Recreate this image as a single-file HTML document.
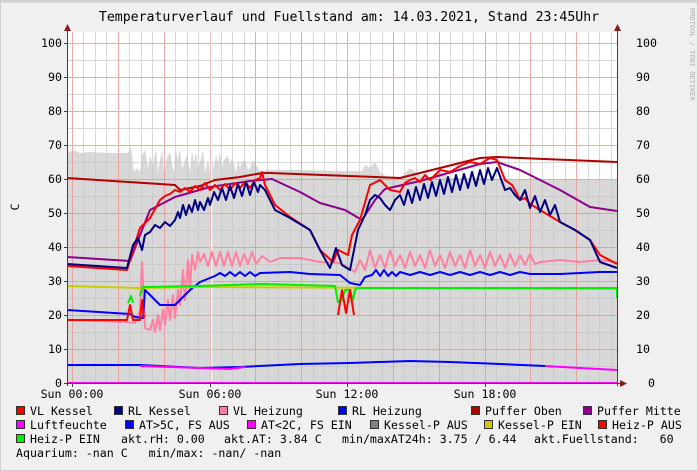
<!DOCTYPE html>
<html><head><meta charset="utf-8"><style>
html,body{margin:0;padding:0;background:#f0f0f0;}
svg{display:block}
text{font-family:"DejaVu Sans Mono","Liberation Mono",monospace;font-size:11.6px;fill:#000}
</style></head><body>
<svg width="698" height="471" viewBox="0 0 698 471" xmlns="http://www.w3.org/2000/svg">
<rect x="0" y="0" width="698" height="471" fill="#f0f0f0"/>
<rect x="0.5" y="0.5" width="697" height="470" fill="none" stroke="#cfcfcf"/>
<rect x="1" y="1" width="696" height="2" fill="#d8d8d8"/>
<text x="349" y="21" text-anchor="middle" style="font-size:13.2px">Temperaturverlauf und Fuellstand am: 14.03.2021, Stand 23:45Uhr</text>
<text transform="translate(690,8) rotate(90)" style="font-size:7px;fill:#b0b0b0">RRDTOOL / TOBI OETIKER</text>
<rect x="67" y="32" width="550" height="351" fill="#ffffff"/>
<polygon fill="#d8d8d8" points="67,383 67,152 75,151 80,153 90,152 110,153 128,153 131,147 134,172 137,168 140,172 142,155 145,150 148,168 150,155 153,165 156,148 158,172 160,160 162,150 164,172 167,158 170,152 172,165 174,172 176,150 178,160 180,148 182,170 185,160 187,155 190,172 192,150 194,163 196,152 198,168 201,158 203,150 205,172 208,160 210,172 212,158 214,168 216,155 218,163 220,152 222,168 224,160 226,158 228,155 230,165 232,158 234,164 236,172 238,160 240,168 242,162 245,160 248,170 250,168 253,160 255,163 258,168 260,172 264,172 265,170 300,170 340,171 362,171 365,165 370,168 375,162 380,172 385,176 400,178 410,168 420,175 430,180 440,172 450,178 480,178 497,179 617,180 617,383"/>
<g stroke="#c8c8c8" stroke-width="1" opacity="0.7">
<path d="M83.5,32V383M95.5,32V383M106.5,32V383M129.5,32V383M141.5,32V383M152.5,32V383M175.5,32V383M187.5,32V383M198.5,32V383M221.5,32V383M232.5,32V383M244.5,32V383M267.5,32V383M278.5,32V383M290.5,32V383M313.5,32V383M324.5,32V383M336.5,32V383M359.5,32V383M370.5,32V383M382.5,32V383M404.5,32V383M416.5,32V383M427.5,32V383M450.5,32V383M462.5,32V383M473.5,32V383M496.5,32V383M508.5,32V383M519.5,32V383M542.5,32V383M553.5,32V383M565.5,32V383M588.5,32V383M599.5,32V383M611.5,32V383"/>
<path d="M67,366.5H617M67,332.5H617M67,298.5H617M67,264.5H617M67,230.5H617M67,196.5H617M67,162.5H617M67,128.5H617M67,94.5H617M67,60.5H617"/>
</g>
<g stroke="#e89090" stroke-width="1" opacity="0.75">
<path d="M72.5,32V383M118.5,32V383M164.5,32V383M210.5,32V383M255.5,32V383M301.5,32V383M347.5,32V383M393.5,32V383M439.5,32V383M485.5,32V383M530.5,32V383M576.5,32V383"/>
<path d="M67,349.5H617M67,315.5H617M67,281.5H617M67,247.5H617M67,213.5H617M67,179.5H617M67,145.5H617M67,111.5H617M67,77.5H617M67,43.5H617"/>
</g>
<path d="M211.5,32V383" stroke="#fff" stroke-width="1.5"/>
<g fill="none" stroke-width="2" stroke-linejoin="round">
<polyline stroke="#ff80a0" points="67,320 127,322 135,323 140,310 142,262 145,328 150,330 153,320 155,332 158,315 160,330 163,310 165,325 168,300 170,320 173,295 175,318 178,290 180,305 183,270 185,300 188,260 190,290 192,255 195,270 198,252 200,262 204,254 208,266 212,252 216,266 220,252 224,266 228,252 232,266 236,252 240,266 244,254 248,264 252,252 256,264 262,256 270,262 280,258 300,258 320,262 340,263 355,272 360,260 365,270 370,250 375,268 380,255 385,268 390,250 395,266 400,255 405,268 410,252 415,266 420,255 425,268 430,250 435,266 440,255 445,268 450,252 455,266 460,255 465,268 470,250 475,266 480,255 485,268 490,252 495,266 500,255 505,268 510,254 515,266 520,255 525,265 530,254 535,264 540,262 560,260 580,262 600,260 617,262"/>
<polyline stroke="#0000ff" points="67,310 130,314 135,317 143,318 145,290 150,295 160,305 175,305 185,295 190,290 200,282 215,276 220,273 225,276 230,272 235,276 240,272 245,276 250,272 255,276 260,273 290,272 310,274 340,275 350,283 360,285 365,277 372,275 376,270 380,276 384,270 388,276 392,272 396,276 400,272 410,275 420,272 430,275 440,272 450,275 460,272 470,275 480,272 490,275 500,272 510,275 520,272 530,274 560,274 600,272 617,272"/>
<polyline stroke="#cccc00" points="67,286 140,288 200,287 617,289"/>
<polyline stroke="#00ee00" points="140,296 143,287 200,286 230,285 260,284 300,285 335,286 338,302 342,300 345,290 350,290 353,300 355,290 357,288 617,288 617,298"/>
<polyline stroke="#00ee00" points="128,303 131,296 133,303"/>
<polyline stroke="#8c008c" points="67,257 130,261 140,235 150,210 175,197 210,187 250,181 272,179 300,192 320,203 345,210 362,220 375,200 385,189 420,181 480,164 497,162 520,170 560,190 590,207 617,211"/>
<polyline stroke="#b00000" points="67,178 175,185 180,190 200,186 215,180 240,177 262,173 270,173 400,178 480,158 497,157 617,162"/>
<polyline stroke="#ff0000" points="67,266 127,270 133,250 140,228 150,218 160,200 165,196 170,194 175,190 180,192 185,188 190,192 195,186 200,190 205,183 210,190 215,185 220,190 225,184 230,190 235,183 240,188 245,182 250,188 255,180 260,178 262,172 265,185 275,205 290,217 310,230 320,250 333,262 338,250 348,255 352,235 360,220 370,185 380,180 390,190 400,192 405,183 410,180 415,178 420,182 425,175 430,180 440,170 450,172 460,166 470,162 480,164 490,158 497,160 505,180 512,185 516,192 520,200 525,198 530,204 540,210 560,222 575,230 590,240 600,255 617,264"/>
<polyline stroke="#ff0000" points="67,320 127,320 130,305 133,320 140,320 142,300 144,318"/>
<polyline stroke="#ff0000" points="338,315 342,290 346,313 350,290 354,315"/>
<polyline stroke="#000080" points="67,264 127,268 133,245 138,238 142,250 145,235 150,232 155,225 160,228 165,222 170,226 175,220 178,212 180,218 183,205 186,215 189,205 192,212 195,200 198,210 200,202 204,210 208,198 210,205 214,192 218,200 222,188 226,200 230,186 234,198 238,184 242,196 246,182 250,195 254,182 258,192 260,185 265,190 275,210 290,218 310,230 320,250 330,268 336,248 342,265 350,270 358,230 365,215 370,200 375,195 380,198 385,205 390,210 395,200 400,195 404,205 408,190 412,203 416,187 420,200 424,184 428,198 432,182 436,196 440,180 444,194 448,177 452,192 456,175 460,190 464,174 468,188 472,172 476,186 480,170 484,184 488,168 492,180 497,168 505,190 510,188 515,195 520,200 525,190 530,208 535,196 540,212 545,200 550,215 555,205 560,222 575,230 590,240 600,262 617,268"/>
<polyline stroke="#0000ff" points="67,365 140,365 200,368 240,367 300,364 350,363 410,361 450,362 500,364 545,366"/>
<polyline stroke="#ff00ff" points="140,366 200,368 230,369 245,367"/>
<polyline stroke="#ff00ff" points="545,366 580,368 617,370"/>
<line x1="67" y1="383" x2="617" y2="383" stroke="#ff00ff"/>
</g>
<g stroke="#404040" stroke-width="1">
<path d="M67.5,30V386M617.5,30V386M64,383.5H622"/>
<path d="M64,43.5H67M64,77.5H67M64,111.5H67M64,145.5H67M64,179.5H67M64,213.5H67M64,247.5H67M64,281.5H67M64,315.5H67M64,349.5H67M64,383.5H67"/>
<path d="M72.5,383V387M210.5,383V387M347.5,383V387M485.5,383V387"/>
</g>
<polygon points="64,31 67.5,24 71,31" fill="#8b1a1a"/>
<polygon points="614,31 617.5,24 621,31" fill="#8b1a1a"/>
<polygon points="620,380 627,383.5 620,387" fill="#8b1a1a"/>
<g text-anchor="end">
<text x="62" y="47">100</text><text x="62" y="81">90</text><text x="62" y="115">80</text><text x="62" y="149">70</text><text x="62" y="183">60</text><text x="62" y="217">50</text><text x="62" y="251">40</text><text x="62" y="285">30</text><text x="62" y="319">20</text><text x="62" y="353">10</text><text x="62" y="387">0</text>
</g>
<g text-anchor="start">
<text x="636" y="47">100</text><text x="636" y="81">90</text><text x="636" y="115">80</text><text x="636" y="149">70</text><text x="636" y="183">60</text><text x="636" y="217">50</text><text x="636" y="251">40</text><text x="636" y="285">30</text><text x="636" y="319">20</text><text x="636" y="353">10</text><text x="648" y="387">0</text>
</g>
<text transform="translate(19,207) rotate(-90)" text-anchor="middle">C</text>
<g text-anchor="middle">
<text x="72" y="398">Sun 00:00</text><text x="210" y="398">Sun 06:00</text><text x="347" y="398">Sun 12:00</text><text x="485" y="398">Sun 18:00</text>
</g>
<g stroke="#303030" stroke-width="1">
<rect x="16.5" y="406.5" width="8" height="8" fill="#ff0000"/>
<rect x="114.5" y="406.5" width="8" height="8" fill="#000080"/>
<rect x="219.5" y="406.5" width="8" height="8" fill="#ff80a0"/>
<rect x="338.5" y="406.5" width="8" height="8" fill="#0000ff"/>
<rect x="471.5" y="406.5" width="8" height="8" fill="#b00000"/>
<rect x="583.5" y="406.5" width="8" height="8" fill="#8c008c"/>
<rect x="16.5" y="420.5" width="8" height="8" fill="#ff00ff"/>
<rect x="125.5" y="420.5" width="8" height="8" fill="#0000ff"/>
<rect x="247.5" y="420.5" width="8" height="8" fill="#ff00ff"/>
<rect x="370.5" y="420.5" width="8" height="8" fill="#808080"/>
<rect x="484.5" y="420.5" width="8" height="8" fill="#cccc00"/>
<rect x="598.5" y="420.5" width="8" height="8" fill="#ff0000"/>
<rect x="16.5" y="434.5" width="8" height="8" fill="#00ee00"/>
</g>
<text x="30" y="415">VL Kessel</text>
<text x="128" y="415">RL Kessel</text>
<text x="233" y="415">VL Heizung</text>
<text x="352" y="415">RL Heizung</text>
<text x="485" y="415">Puffer Oben</text>
<text x="597" y="415">Puffer Mitte</text>
<text x="30" y="429">Luftfeuchte</text>
<text x="139" y="429">AT&gt;5C, FS AUS</text>
<text x="261" y="429">AT&lt;2C, FS EIN</text>
<text x="384" y="429">Kessel-P AUS</text>
<text x="498" y="429">Kessel-P EIN</text>
<text x="612" y="429">Heiz-P AUS</text>
<text x="30" y="443">Heiz-P EIN</text>
<text x="121" y="443">akt.rH: 0.00</text>
<text x="224" y="443">akt.AT: 3.84 C</text>
<text x="342" y="443">min/maxAT24h: 3.75 / 6.44</text>
<text x="534" y="443" xml:space="preserve">akt.Fuellstand:   60</text>
<text x="16" y="457" xml:space="preserve">Aquarium: -nan C   min/max: -nan/ -nan</text>
</svg>
</body></html>
